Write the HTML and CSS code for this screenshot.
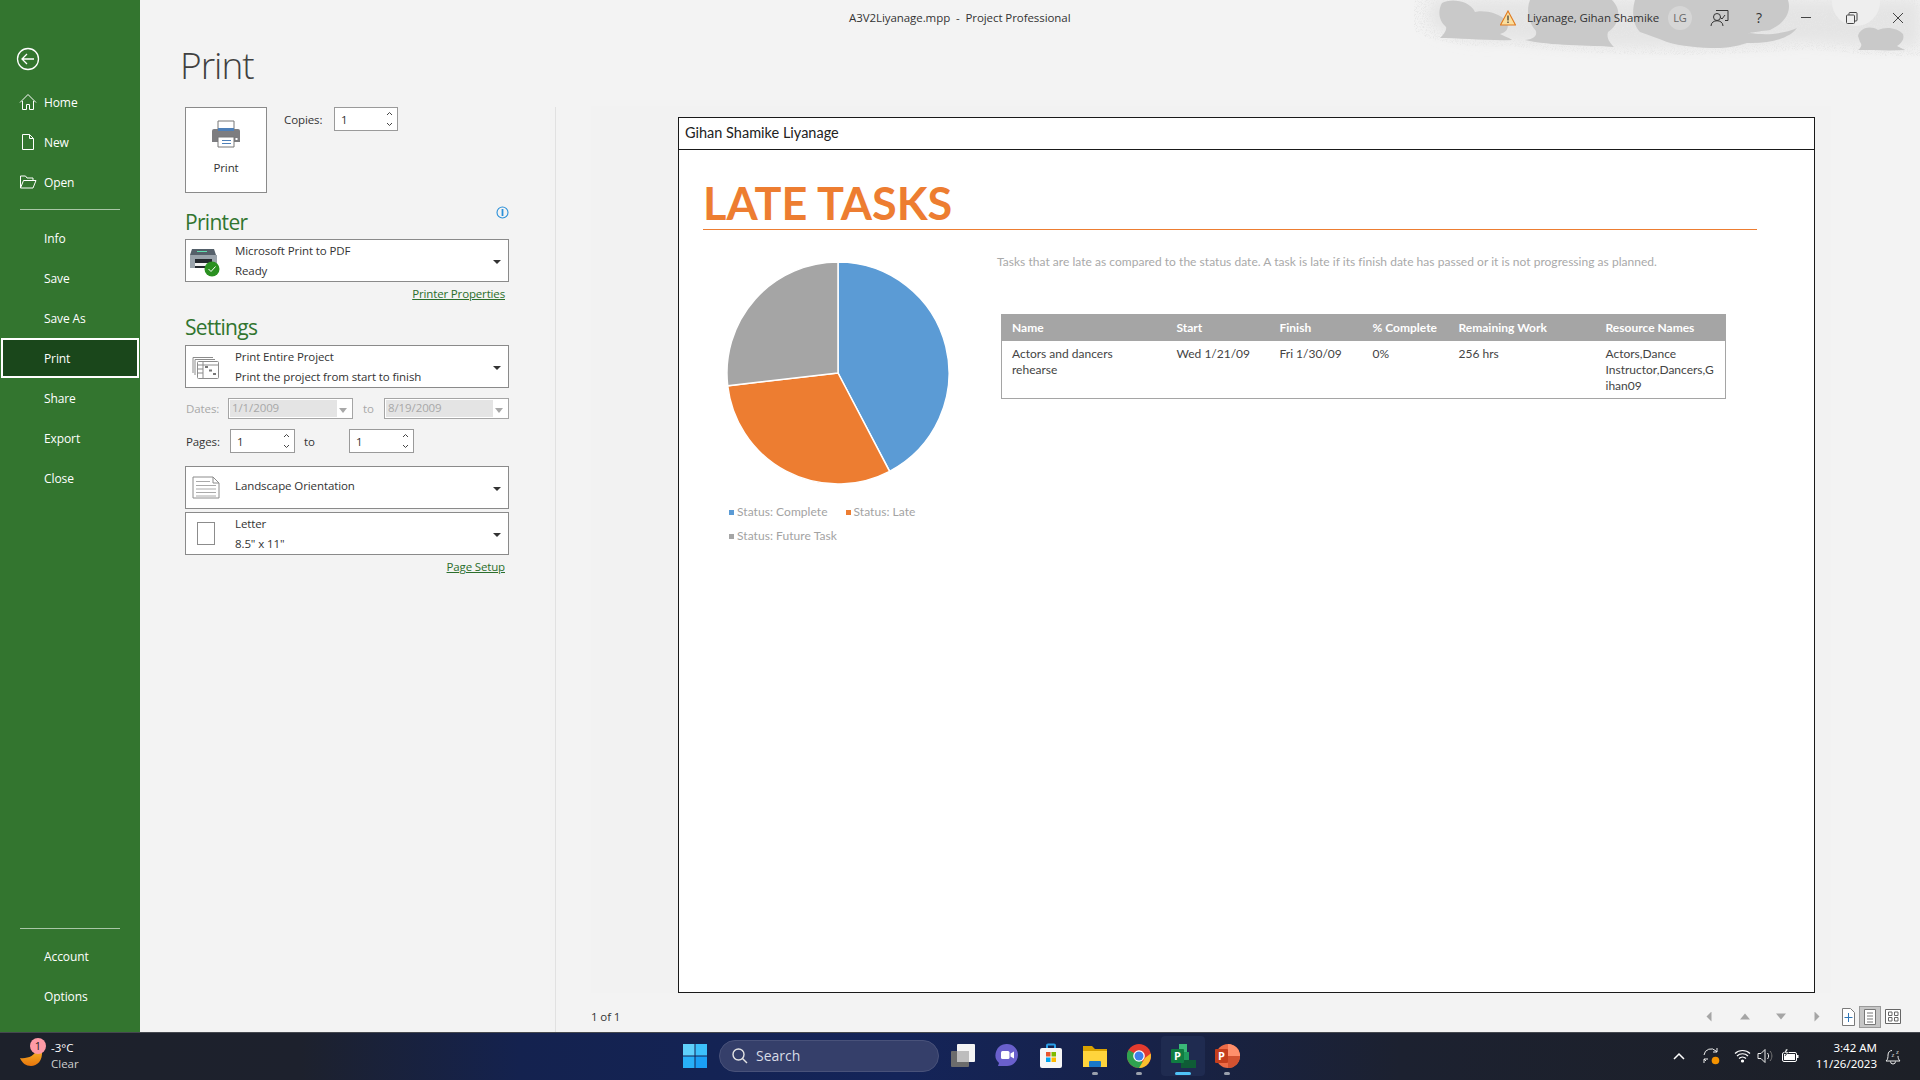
FILE: index.html
```html
<!doctype html>
<html>

<head>
	<meta charset="utf-8">
	<title>A3V2Liyanage.mpp - Project Professional</title>
	<link rel="stylesheet" href="styles.css">
</head>

<body>
	<div class="app">
		<nav class="nav">
			<svg class="backIcon" width="32" height="32" viewBox="0 0 32 32" fill="none" stroke="#fff" stroke-width="1.3">
				<circle cx="16" cy="16" r="10.5" />
				<path d="M10 16h12M15 11l-5 5 5 5" />
			</svg>
			<a class="navItem"><svg width="18" height="18" viewBox="0 0 18 18" fill="none" stroke="#fff"><path d="M1 9.500 9 1.500l8 8M3.500 8v8.500h4v-5h3v5h4V8" /></svg>Home</a>
			<a class="navItem"><svg width="18" height="18" viewBox="0 0 18 18" fill="none" stroke="#fff"><path d="M3.500 1.500h7l4 4v11h-11zM10.500 1.500v4h4" /></svg>New</a>
			<a class="navItem"><svg width="18" height="18" viewBox="0 0 18 18" fill="none" stroke="#fff"><path d="M1.500 15V3h5l1.500 2h6v2.500M1.500 15h12.500l3-7.500H4.500z" /></svg>Open</a>
			<div class="navLine"></div>
			<a class="navItem">Info</a>
			<a class="navItem">Save</a>
			<a class="navItem">Save As</a>
			<a class="navItem current">Print</a>
			<a class="navItem">Share</a>
			<a class="navItem">Export</a>
			<a class="navItem">Close</a>
			<div class="navLine bottom"></div>
			<a class="navItem">Account</a>
			<a class="navItem">Options</a>
		</nav>

		<div class="main">
			<svg class="clouds" width="520" height="60" viewBox="0 0 520 60">
				<defs>
					<filter id="soft" x="-10%" y="-30%" width="120%" height="160%">
						<feGaussianBlur stdDeviation="7" />
					</filter>
					<filter id="speckle" x="-5%" y="-5%" width="110%" height="110%">
						<feTurbulence type="fractalNoise" baseFrequency="1.1" numOctaves="2" seed="4" result="n" />
						<feColorMatrix in="n" type="matrix" values="0 0 0 0 0.80  0 0 0 0 0.80  0 0 0 0 0.80  0 0 0 4 -1.900" result="dots" />
						<feComposite in="dots" in2="SourceAlpha" operator="in" />
					</filter>
				</defs>
				<path class="fringeBase" filter="url(#soft)" d="M30 0H520V46C470 50 440 42 400 42 300 50 180 48 110 40 70 42 44 36 30 24z" />
				<path filter="url(#speckle)" d="M14 0H520V56C470 58 440 50 400 50 300 58 180 56 110 46 70 48 30 44 14 30z" />
				<ellipse class="cloudGlow" cx="456" cy="2" rx="24" ry="24" />
				<g class="cloudShapes">
					<path d="M42 3C50-2 70 0 75 12 82 10 100 12 107 22 110 30 104 33 100 34 106 37 110 38 112 40 90 41 60 38 40 38 44 34 47 30 46 27 38 20 38 10 42 3z" />
					<path d="M130 0H212C222 10 220 24 208 32 206 38 210 43 214 47 190 45 150 46 125 40 134 39 137 36 136 31 128 22 126 10 130 0z" />
					<path d="M235 0H388C392 12 384 24 370 30 345 33 347 34 350 33 370 36 385 33 397 28 390 38 370 44 347 43 335 47 325 48 317 48 300 48 280 46 267 42 258 38 248 35 240 32 232 24 232 10 235 0z" />
					<path d="M458 36C460 28 470 25 478 30 486 26 498 28 503 34 505 40 500 44 497 46L505 50C490 51 472 50 458 50 462 47 462 44 460 42z" />
				</g>
			</svg>

			<header class="titleBar">
				<div class="docTitle">A3V2Liyanage.mpp&nbsp; -&nbsp; Project Professional</div>
				<div class="account">
					<svg width="16" height="16" viewBox="0 0 16 16"><path d="M8 1 15.500 15H.500z" fill="#fbdf9e" stroke="#e07a1f" stroke-width="1.100" /><path d="M8 5.500v5M8 11.500v1.500" stroke="#333" stroke-width="1.200" /></svg>
					<span class="userName">Liyanage, Gihan Shamike</span>
					<span class="avatar">LG</span>
				</div>
				<div class="winButtons">
					<svg width="20" height="20" viewBox="0 0 20 20" fill="none" stroke="#333"><path d="M6 2.500h12v10h-3M10 9l2 2 3-4" /><circle cx="7" cy="9" r="3.500" /><path d="M1 18c0-7 12-7 12 0" /></svg>
					<span class="helpMark">?</span>
					<svg class="winMin" width="12" height="12" viewBox="0 0 12 12" stroke="#444"><path d="M1 5.500h10" /></svg>
					<svg class="winMax" width="12" height="12" viewBox="0 0 12 12" fill="none" stroke="#444"><rect x=".500" y="3" width="8" height="8.500" rx="1" /><path d="M3 2.800V1.500q0-1 1-1h6q1 0 1 1v6.500q0 1-1 1H8.700" /></svg>
					<svg class="winClose" width="12" height="12" viewBox="0 0 12 12" stroke="#444"><path d="M1 1l10 10M11 1 1 11" /></svg>
				</div>
			</header>

			<div class="backstage">
				<section class="panel">
					<h1 class="pageTitle">Print</h1>
					<div class="printRow">
						<button class="printBtn">
							<svg width="30" height="28" viewBox="0 0 30 28">
								<path d="M7 1h16v9H7z" fill="#fff" stroke="#777" />
								<path d="M3 9h24q2 0 2 2v11H1V11q0-2 2-2z" fill="#7d7d80" />
								<path d="M7 8h16v3H7z" fill="#4f80b8" />
								<path d="M7 17h16v10H7z" fill="#fff" stroke="#777" />
								<path d="M11 20.500h9M11 23.500h9" stroke="#4f80b8" />
								<rect x="24.500" y="18" width="2" height="2" fill="#fff" />
							</svg>
							<span>Print</span>
						</button>
						<div class="copies">
							<span class="copyLabel">Copies:</span>
							<span class="spin copySpin"><span>1</span><svg width="7" height="18" viewBox="0 0 7 18" fill="none" stroke="#444"><path d="M1 5l2.500-2.500L6 5M1 13l2.500 2.500L6 13" /></svg></span>
						</div>
					</div>

					<div class="sectionHead">
						<h2>Printer</h2>
						<svg class="infoIcon" width="13" height="13" viewBox="0 0 13 13" fill="none" stroke="#2b90d9" stroke-width="1.100"><circle cx="6.500" cy="6.500" r="5.500" /><path d="M6.500 3v7" stroke-width="1.800" /></svg>
					</div>
					<div class="drop">
						<svg class="dropIcon" width="32" height="32" viewBox="0 0 32 32">
							<path d="M3 4h22l2 6H1z" fill="#55606a" />
							<path d="M8 6.500h10" stroke="#5fe0b0" />
							<path d="M1 10h27v13H1z" fill="#9aa3ab" />
							<path d="M6 14h17v9H6z" fill="#23282d" />
							<path d="M6 18h17v3H6z" fill="#f2f2f2" />
							<circle cx="23" cy="24" r="7.500" fill="#2a9020" />
							<path d="M19.500 24l2.500 2.500 4.500-5" fill="none" stroke="#fff" />
						</svg>
						<div class="dropText"><div>Microsoft Print to PDF</div><div>Ready</div></div>
						<i class="caret"></i>
					</div>
					<a class="panelLink">Printer Properties</a>

					<div class="sectionHead settings"><h2>Settings</h2></div>
					<div class="drop">
						<svg class="dropIcon" width="32" height="32" viewBox="0 0 32 32" fill="none" stroke="#8c8c8c">
							<path d="M4 22V6.500h20M6 24V8.500h20" />
							<rect x="8.500" y="10.500" width="21" height="17" rx="1" fill="#fff" />
							<path d="M8.500 14h21M14 10.500v17M8.500 18h5.500M8.500 22h5.500" />
							<path d="M16 16h3M20 19.500h3M24 23h3" stroke-width="2" stroke="#777" />
						</svg>
						<div class="dropText"><div>Print Entire Project</div><div>Print the project from start to finish</div></div>
						<i class="caret"></i>
					</div>
					<div class="dateRow">
						<span class="dateLabel">Dates:</span>
						<span class="dateBox"><span class="dateVal">1/1/2009</span><i class="caret grey"></i></span>
						<span class="dateTo">to</span>
						<span class="dateBox"><span class="dateVal">8/19/2009</span><i class="caret grey"></i></span>
					</div>
					<div class="pageRow">
						<span class="pagesLabel">Pages:</span>
						<span class="spin"><span>1</span><svg width="7" height="18" viewBox="0 0 7 18" fill="none" stroke="#444"><path d="M1 5l2.500-2.500L6 5M1 13l2.500 2.500L6 13" /></svg></span>
						<span class="pagesTo">to</span>
						<span class="spin"><span>1</span><svg width="7" height="18" viewBox="0 0 7 18" fill="none" stroke="#444"><path d="M1 5l2.500-2.500L6 5M1 13l2.500 2.500L6 13" /></svg></span>
					</div>
					<div class="drop orient">
						<svg class="dropIcon" width="32" height="32" viewBox="0 0 32 32" fill="none" stroke="#8c8c8c">
							<path d="M4 5h20l6 6v15H4zM24 5v6h6" fill="#fff" />
							<path d="M7 9.500h14M7 13.500h20M7 17h20M7 20.500h20M7 24h20" stroke="#aaa" />
						</svg>
						<div class="dropText single"><div>Landscape Orientation</div></div>
						<i class="caret"></i>
					</div>
					<div class="drop paper">
						<svg class="dropIcon" width="32" height="32" viewBox="0 0 32 32" fill="none" stroke="#8c8c8c"><rect x="8.500" y="4.500" width="17" height="22" fill="#fff" /></svg>
						<div class="dropText"><div>Letter</div><div>8.5" x 11"</div></div>
						<i class="caret"></i>
					</div>
					<a class="panelLink">Page Setup</a>
				</section>

				<section class="previewPane">
					<div class="previewArea">
						<div class="sheet">
							<div class="sheetHead">Gihan Shamike Liyanage</div>
							<div class="report">
								<h3 class="reportTitle">LATE TASKS</h3>
								<div class="reportBody">
									<div class="chartCol">
										<svg class="pie" width="226" height="226" viewBox="-113 -113 226 226">
											<path d="M0 0V-111A111 111 0 0 1 51.600 98.300z" fill="#5b9bd5" stroke="#fff" stroke-width="1.500" />
											<path d="M0 0 51.600 98.300A111 111 0 0 1 -110.300 12.800z" fill="#ed7d31" stroke="#fff" stroke-width="1.500" />
											<path d="M0 0-110.300 12.800A111 111 0 0 1 0-111z" fill="#a5a5a5" stroke="#fff" stroke-width="1.500" />
										</svg>
										<div class="legend">
											<span class="legendItem"><i class="sq blue"></i>Status: Complete</span>
											<span class="legendItem"><i class="sq orange"></i>Status: Late</span>
											<span class="legendItem wide"><i class="sq grey"></i>Status: Future Task</span>
										</div>
									</div>
									<div class="tableCol">
										<p class="reportNote">Tasks that are late as compared to the status date. A task is late if its finish date has passed or it is not progressing as planned.</p>
										<table class="taskTable">
											<tr>
												<th class="colName">Name</th>
												<th class="colStart">Start</th>
												<th class="colFinish">Finish</th>
												<th class="colPct">% Complete</th>
												<th class="colWork">Remaining Work</th>
												<th>Resource Names</th>
											</tr>
											<tr>
												<td>Actors and dancers<br>rehearse</td>
												<td>Wed 1/21/09</td>
												<td>Fri 1/30/09</td>
												<td>0%</td>
												<td>256 hrs</td>
												<td>Actors,Dance<br>Instructor,Dancers,G<br>ihan09</td>
											</tr>
										</table>
									</div>
								</div>
							</div>
						</div>
					</div>
					<div class="pager">
						<span class="pageCount">1 of 1</span>
						<div class="pagerNav">
							<i class="tri left"></i><i class="tri up"></i><i class="tri dn"></i><i class="tri right"></i>
						</div>
						<div class="zoomBtns">
							<svg width="13" height="18" viewBox="0 0 13 18" fill="#fff" stroke="#7a7a7a"><path d="M.500.500h8l4 4v13H.500z" /><path d="M6.500 5v9M2.500 9.500h8" stroke="#2e75b6" /></svg>
							<span class="zoomBtn on"><svg width="12" height="16" viewBox="0 0 12 16" fill="#fff" stroke="#777"><path d="M.500.500h11v15H.500zM3 4h6M3 7h6M3 10h6M3 13h6" /></svg></span>
							<svg width="16" height="15" viewBox="0 0 16 15" fill="#fff" stroke="#666"><path d="M.500.500h15v14H.500zM3.500 3h3.500v3.500H3.500zM9.500 3H13v3.500H9.500zM3.500 8.500h3.500V12H3.500zM9.500 8.500H13V12H9.500z" /></svg>
						</div>
					</div>
				</section>
			</div>
		</div>
	</div>

	<footer class="taskbar">
		<div class="weather">
			<svg class="moon" width="28" height="32" viewBox="0 0 28 32">
				<defs>
					<linearGradient id="moonFill" x1="0" y1="0" x2="0" y2="1">
						<stop offset="0" stop-color="#f8b52a" />
						<stop offset="1" stop-color="#e8760c" />
					</linearGradient>
				</defs>
				<path d="M1 21C8 22 16 19 18 12L23 13C24 24 18 29 12 29 7 29 3 26 1 21z" fill="url(#moonFill)" />
				<circle cx="19" cy="9" r="8" fill="#ff9aa5" />
				<text x="19" y="13" class="badgeNum">1</text>
			</svg>
			<div class="weatherText"><div>-3°C</div><div class="dim">Clear</div></div>
		</div>
		<div class="taskCenter">
			<svg width="24" height="24" viewBox="0 0 24 24"><path d="M0 0h11.500v11.500H0z" fill="#5fd0fb" /><path d="M12.500 0H24v11.500H12.500z" fill="#3cc0fb" /><path d="M0 12.500h11.500V24H0z" fill="#28b0f8" /><path d="M12.500 12.500H24V24H12.500z" fill="#1a9ff5" /></svg>
			<div class="searchBox">
				<svg width="16" height="16" viewBox="0 0 16 16" fill="none" stroke="#e4e4e4" stroke-width="1.400"><circle cx="6.500" cy="6.500" r="5.500" /><path d="M10.500 10.500 15 15" /></svg>
				<span>Search</span>
			</div>
			<div class="taskIcons">
				<span class="taskIcon"><svg width="24" height="24" viewBox="0 0 24 24"><rect x="6" y="0" width="18" height="18" rx="1" fill="#f4f4f4" /><rect x="0" y="7" width="18" height="16" rx="1" fill="#6c6c6c" /><rect x="6" y="7" width="12" height="11" fill="#bdbdbd" /></svg></span>
				<span class="taskIcon"><svg width="24" height="26" viewBox="0 0 24 26"><path d="M12 1a11 11 0 0 1 0 22H3l1-3A11 11 0 0 1 12 1z" fill="#6a60cc" /><rect x="6" y="8" width="8.500" height="8" rx="1.500" fill="#fff" /><path d="M15.500 10.500 19 8.500v7l-3.500-2z" fill="#fff" /></svg></span>
				<span class="taskIcon"><svg width="24" height="26" viewBox="0 0 24 26"><path d="M8 6V2.500q0-1 1-1h6q1 0 1 1V6" fill="none" stroke="#2aa0e8" stroke-width="2" /><rect x="1" y="5" width="22" height="20" rx="2" fill="#f6f6f6" /><rect x="7" y="9" width="4.500" height="4.500" fill="#e8552d" /><rect x="12.500" y="9" width="4.500" height="4.500" fill="#7fba00" /><rect x="7" y="14.500" width="4.500" height="4.500" fill="#00a4ef" /><rect x="12.500" y="14.500" width="4.500" height="4.500" fill="#ffb900" /></svg></span>
				<span class="taskIcon open"><svg width="24" height="24" viewBox="0 0 24 24"><path d="M0 2h9l3 3h12v6H0z" fill="#d9a200" /><path d="M0 7h24v16H0z" fill="#ffd43c" /><rect x="6" y="17" width="12" height="6" rx="1" fill="#1a78c8" /></svg></span>
				<span class="taskIcon open"><svg width="24" height="24" viewBox="-12 -12 24 24"><circle r="12" fill="#e33b2e" /><path d="M-10.400 6A12 12 0 0 1-10.400-6L0 0l6 10.400A12 12 0 0 1-10.400 6z" fill="#2fa34f" /><path d="M11.700-2.500A12 12 0 0 1 0 12L6 2z" fill="#fbc02d" /><circle r="5.800" fill="#fff" /><circle r="4.500" fill="#3f80ea" /></svg></span>
				<span class="taskIcon active"><svg width="25" height="24" viewBox="0 0 25 24"><path d="M8 0h8v8h-8z" fill="#3ab878" /><path d="M10 8h8v8h-8z" fill="#1f9a5c" /><path d="M10 16h15v8H10z" fill="#0f5c36" /><rect x="0" y="5" width="13" height="14" rx="1" fill="#107c41" /><text x="3" y="16" class="iconLetter">P</text></svg></span>
				<span class="taskIcon open"><svg width="25" height="24" viewBox="0 0 25 24"><circle cx="13" cy="12" r="12" fill="#ed6c47" /><path d="M13 0a12 12 0 0 1 12 12H13z" fill="#ff8f6b" /><path d="M13 12h12a12 12 0 0 1-12 12z" fill="#d35230" /><rect x="0" y="5" width="13" height="14" rx="1" fill="#c43e1c" /><text x="3" y="16" class="iconLetter">P</text></svg></span>
			</div>
		</div>
		<div class="tray">
			<svg width="12" height="8" viewBox="0 0 12 8" fill="none" stroke="#fff" stroke-width="1.500"><path d="M1 7l5-5 5 5" /></svg>
			<svg class="traySync" width="18" height="18" viewBox="0 0 18 18" fill="none" stroke="#eee"><path d="M2 8a7 7 0 0 1 12-4l1 1M15 1v4h-4M2 16v-4h4M2 12l2 2" /><circle cx="13.500" cy="13.500" r="3.800" fill="#f59300" stroke="none" /></svg>
			<svg class="trayWifi" width="17" height="14" viewBox="0 0 17 14" fill="none" stroke="#fff" stroke-width="1.200"><path d="M1 4.500c4-4 11-4 15 0M3 7c3-3 8-3 11 0M5 9.500c2-2 5-2 7 0" /><circle cx="8.500" cy="12" r="1" fill="#fff" /></svg>
			<svg class="traySound" width="17" height="16" viewBox="0 0 17 16" fill="none" stroke="#eee"><path d="M1 5.500h3L8 1.500v13l-4-4H1z" /><path d="M10.500 5c1.500 2 1.500 4 0 6" /><path d="M13 3c2.500 3 2.500 7 0 10" stroke="#777" /></svg>
			<svg class="trayBattery" width="17" height="14" viewBox="0 0 17 14"><rect x=".500" y="3.500" width="14" height="9" rx="1.500" fill="none" stroke="#fff" /><rect x="2" y="5" width="11" height="6" fill="#fff" /><rect x="15" y="6" width="1.500" height="3" fill="#fff" /><path d="M4 0 2 4h2.500L3 7l4-4H4.500L6 0z" fill="#fff" stroke="#1d2027" stroke-width=".5" /></svg>
			<div class="clock"><div>3:42 AM</div><div>11/26/2023</div></div>
			<svg class="trayBell" width="16" height="18" viewBox="0 0 16 18" fill="none" stroke="#eee"><path d="M1 14c2-1.500 2-4 2-6 0-3 2-4.500 4-4.500M15 14H1M5.500 14.500a2.500 2.500 0 0 0 5 0M13 9c0 2 .5 3.500 2 5" /><text x="6.500" y="10" class="zzz">z</text><text x="11" y="6.500" class="zzz">z</text></svg>
		</div>
	</footer>
</body>

</html>
```
FILE: styles.css
```css
* {
	box-sizing: border-box;
}

html,
body {
	margin: 0;
	height: 100%;
}

body {
	width: 1920px;
	height: 1080px;
	overflow: hidden;
	display: flex;
	flex-direction: column;
	background: #f3f3f3;
	font-family: "Open Sans", "Noto Sans", sans-serif;
	font-size: 11.5px;
	letter-spacing: -0.1px;
	color: #333;
}

h1,
h2,
h3,
p {
	margin: 0;
	font-weight: normal;
}

i {
	font-style: normal;
}

.app {
	display: flex;
	height: 1032px;
}

/* left green column */
.nav {
	width: 140px;
	flex: none;
	display: flex;
	flex-direction: column;
	background: #33752f;
	color: #fff;
	font-size: 12px;
	padding-top: 43px;
}

.backIcon {
	margin: 0 0 7px 12px;
}

.navItem {
	height: 40px;
	display: flex;
	align-items: center;
	padding-left: 44px;
	position: relative;
}

.navItem svg {
	position: absolute;
	left: 19px;
	top: 11px;
}

.navItem.current {
	margin: 0 1px;
	padding-left: 41px;
	background: #1a471b;
	border: 2px solid #fff;
}

.navLine {
	height: 1px;
	margin: 7px 20px 8px;
	background: #a9c6a7;
}

.navLine.bottom {
	margin-top: auto;
	margin-bottom: 7px;
}

.nav .navItem:last-child {
	margin-bottom: 16px;
}

/* right part */
.main {
	flex: 1;
	display: flex;
	flex-direction: column;
	position: relative;
	min-width: 0;
}

.clouds {
	position: absolute;
	top: 0;
	right: 0;
}

.fringeBase {
	fill: #e4e4e4;
}

.cloudGlow {
	fill: #eeeeee;
}

.cloudShapes {
	fill: #c9c9c9;
}

.titleBar {
	position: relative;
	height: 36px;
	flex: none;
	display: flex;
	align-items: center;
	padding: 0 0 1px 709px;
	letter-spacing: -0.07px;
}

.docTitle {
	width: 651px;
	white-space: nowrap;
}

.account {
	display: flex;
	align-items: center;
}

.userName {
	margin-left: 11px;
	width: 141px;
	white-space: nowrap;
}

.avatar {
	width: 24px;
	height: 24px;
	border-radius: 50%;
	background: #d6d6d6;
	color: #666;
	font-size: 11px;
	display: flex;
	align-items: center;
	justify-content: center;
}

.winButtons {
	display: flex;
	align-items: center;
	margin-left: 18px;
}

.helpMark {
	margin-left: 26px;
	font-size: 14px;
}

.winMin {
	margin-left: 38px;
}

.winMax {
	margin-left: 34px;
}

.winClose {
	margin-left: 34px;
}

.backstage {
	flex: 1;
	display: flex;
	min-height: 0;
}

.panel {
	width: 415px;
	flex: none;
	padding: 0 46px 0 45px;
}

.pageTitle {
	font-size: 37px;
	letter-spacing: -1px;
	font-weight: 300;
	line-height: 57px;
	margin-left: -5px;
	height: 71px;
	color: #404040;
}

.printRow {
	display: flex;
	align-items: flex-start;
}

.printBtn {
	width: 82px;
	height: 86px;
	padding: 12px 0 0;
	background: #fff;
	border: 1px solid #8a8a8a;
	font: inherit;
	letter-spacing: inherit;
	color: #333;
	display: flex;
	flex-direction: column;
	align-items: center;
	gap: 12px;
}

.copies {
	display: flex;
	align-items: center;
	margin-left: 17px;
}

.copyLabel {
	width: 50px;
}

.spin {
	display: flex;
	justify-content: space-between;
	width: 65px;
	height: 24px;
	padding: 0 4px 0 6px;
	background: #fff;
	border: 1px solid #9a9a9a;
	align-items: center;
}

.copySpin {
	width: 64px;
}

.sectionHead {
	display: flex;
	justify-content: space-between;
	align-items: flex-start;
	margin-top: 15px;
	height: 31px;
}

.sectionHead h2 {
	font-size: 21px;
	letter-spacing: -0.7px;
	line-height: 28px;
	color: #31752f;
}

.infoIcon {
	margin-top: -2px;
}

.sectionHead.settings {
	margin-top: 4px;
	height: 34px;
}

.sectionHead.settings h2 {
	line-height: 33px;
}

.drop {
	width: 324px;
	height: 43px;
	background: #fff;
	border: 1px solid #8a8a8a;
	display: flex;
	align-items: center;
	position: relative;
	padding-left: 49px;
}

.dropIcon {
	position: absolute;
	left: 3px;
	top: 5px;
}

.dropText {
	line-height: 20px;
	white-space: nowrap;
}

.dropText.single {
	margin-top: -3px;
}

.caret {
	position: absolute;
	right: 7px;
	top: 20px;
	border: 4px solid transparent;
	border-top: 4px solid #333;
	border-bottom: 0;
	width: 0;
	height: 0;
}

.caret.grey {
	top: 9px;
	right: 5px;
	border-width: 5px 4px 0;
	border-top-color: #a8a8a8;
}

.panelLink {
	display: block;
	height: 25px;
	line-height: 24px;
	text-align: right;
	padding-right: 4px;
	letter-spacing: -0.15px;
	color: #2b6e2b;
	text-decoration: underline;
}

.dateRow {
	display: flex;
	align-items: center;
	margin-top: 10px;
	color: #a8a8a8;
}

.dateLabel {
	width: 43px;
	padding-left: 1px;
}

.dateBox {
	position: relative;
	width: 125px;
	height: 21px;
	border: 1px solid #a5a5a5;
	background: #fff;
	padding: 1px;
}

.dateVal {
	display: block;
	width: 107px;
	height: 17px;
	line-height: 15px;
	padding-left: 2px;
	background: #e4e4e4;
}

.dateTo {
	width: 31px;
	text-align: center;
}

.pageRow {
	display: flex;
	align-items: center;
	margin-top: 10px;
	height: 24px;
}

.pagesLabel {
	width: 45px;
	padding-left: 1px;
}

.pagesTo {
	width: 54px;
	padding-left: 9px;
}

.orient {
	margin-top: 13px;
}

.paper {
	margin-top: 3px;
}

/* report preview */
.previewPane {
	flex: 1;
	min-width: 0;
	display: flex;
	flex-direction: column;
	border-left: 1px solid #e1e1e1;
	margin-top: 71px;
	padding-left: 35px;
}

.previewArea {
	height: 887px;
	margin: -1px 89px 0 0;
	padding: 11px 0 0 87px;
	background: #f2f2f2;
}

.sheet {
	width: 1137px;
	height: 876px;
	background: #fff;
	border: 1.500px solid #1a1a1a;
	color: #222;
	font-family: Lato, "Open Sans", sans-serif;
	letter-spacing: 0;
}

.sheetHead {
	height: 32px;
	line-height: 30px;
	padding-left: 6px;
	font-size: 14.500px;
	border-bottom: 1.500px solid #1a1a1a;
}

.report {
	padding: 33px 0 0 24px;
}

.reportTitle {
	font-size: 45px;
	font-weight: 700;
	line-height: 41px;
	height: 47px;
	color: #ed7d31;
	border-bottom: 1.500px solid #ed7d31;
	width: 1054px;
}

.reportBody {
	display: flex;
	margin-top: 29px;
}

.chartCol {
	width: 294px;
	flex: none;
	padding-left: 22px;
}

.pie {
	display: block;
	margin-top: 1px;
}

.legend {
	width: 230px;
	margin-top: 14px;
	padding-left: 4px;
	display: flex;
	flex-wrap: wrap;
	color: #a3a3a3;
	font-size: 12px;
	letter-spacing: 0.05px;
	line-height: 24px;
}

.legendItem {
	margin-right: 18px;
	white-space: nowrap;
	display: flex;
	align-items: center;
}

.legendItem.wide {
	width: 100%;
}

.sq {
	width: 5px;
	height: 5px;
	margin-right: 3px;
}

.sq.blue {
	background: #5b9bd5;
}

.sq.orange {
	background: #ed7d31;
}

.sq.grey {
	background: #a5a5a5;
}

.tableCol {
	flex: 1;
	min-width: 0;
}

.reportNote {
	margin: -7px 0 42px;
	color: #a9a9a9;
	font-size: 12px;
	letter-spacing: 0.03px;
	line-height: 20px;
}

.taskTable {
	width: 725px;
	margin-left: 4px;
	border-collapse: collapse;
	table-layout: fixed;
	font-size: 12px;
	border: 1px solid #a5a5a5;
	border-top: 0;
}

.taskTable th {
	height: 27px;
	padding: 0 0 0 10px;
	background: #a5a5a5;
	color: #fff;
	text-align: left;
	font-weight: 700;
	white-space: nowrap;
}

.taskTable td {
	height: 57px;
	padding: 5px 0 0 10px;
	vertical-align: top;
	line-height: 16px;
	color: #444;
}

.colName {
	width: 165px;
}

.colStart {
	width: 103px;
}

.colFinish {
	width: 93px;
}

.colPct {
	width: 86px;
}

.colWork {
	width: 147px;
}

.pager {
	flex: 1;
	display: flex;
	align-items: center;
	padding-top: 8px;
}

.pageCount {
	width: 1113px;
	flex: none;
}

.pagerNav {
	display: flex;
	align-items: center;
	gap: 26px;
}

.tri {
	width: 10px;
	height: 10px;
	background: #a5a5a5;
}

.tri.left {
	clip-path: polygon(75% 0, 75% 100%, 25% 50%);
}

.tri.right {
	clip-path: polygon(25% 0, 75% 50%, 25% 100%);
}

.tri.up {
	clip-path: polygon(50% 20%, 100% 80%, 0 80%);
}

.tri.dn {
	clip-path: polygon(0 20%, 100% 20%, 50% 80%);
}

.zoomBtns {
	display: flex;
	align-items: center;
	gap: 4px;
	margin-left: 20px;
}

.zoomBtn.on {
	width: 22px;
	height: 22px;
	display: flex;
	align-items: center;
	justify-content: center;
	background: #c6c6c6;
	border: 1px solid #9a9a9a;
}

/* windows taskbar */
.taskbar {
	height: 48px;
	flex: none;
	display: flex;
	align-items: center;
	padding-bottom: 2px;
	color: #fff;
	letter-spacing: 0;
	border-top: 1px solid #45484f;
	background: linear-gradient(90deg, #1d212b 0, #1d212d 300px, #14224f 520px, #142459 900px, #172248 1150px, #1c2130 1400px, #1d2027 1920px);
}

.weather {
	width: 683px;
	flex: none;
	display: flex;
	align-items: center;
	padding-left: 19px;
}

.moon {
	margin-top: -5px;
}

.badgeNum {
	font-size: 11px;
	fill: #222;
	text-anchor: middle;
}

.weatherText {
	margin-left: 4px;
	line-height: 16px;
	font-size: 11.500px;
}

.dim {
	color: #cfcfcf;
}

.taskCenter {
	display: flex;
	align-items: center;
}

.searchBox {
	width: 220px;
	height: 32px;
	margin-left: 12px;
	padding-left: 12px;
	display: flex;
	align-items: center;
	gap: 8px;
	background: #353f6a;
	border: 1px solid #49527a;
	border-radius: 16px;
	font-size: 14px;
	color: #d8dbe6;
}

.taskIcons {
	display: flex;
	margin-left: 2px;
}

.taskIcon {
	width: 44px;
	height: 40px;
	display: flex;
	align-items: center;
	justify-content: center;
	position: relative;
}

.taskIcon.open::after,
.taskIcon.active::after {
	content: "";
	position: absolute;
	left: 19px;
	bottom: 1px;
	width: 6px;
	height: 3px;
	border-radius: 2px;
	background: #9aa0ac;
}

.taskIcon.active {
	background: #1f2b50;
	border-radius: 4px;
}

.taskIcon.active::after {
	left: 14px;
	width: 16px;
	background: #4fc3f7;
}

.iconLetter {
	font: 700 11px "Open Sans", sans-serif;
	fill: #fff;
}

.tray {
	margin-left: auto;
	display: flex;
	align-items: center;
	padding-right: 19px;
}

.traySync {
	margin-left: 17px;
}

.trayWifi {
	margin-left: 14.500px;
}

.traySound {
	margin-left: 6px;
}

.trayBattery {
	margin-left: 8px;
}

.clock {
	width: 66px;
	margin-left: 12px;
	text-align: right;
	white-space: nowrap;
	line-height: 16px;
	font-size: 11.500px;
	font-family: "Noto Sans", sans-serif;
}

.trayBell {
	margin-left: 8px;
}

.zzz {
	font-size: 6px;
	fill: #eee;
	stroke: none;
}
```
